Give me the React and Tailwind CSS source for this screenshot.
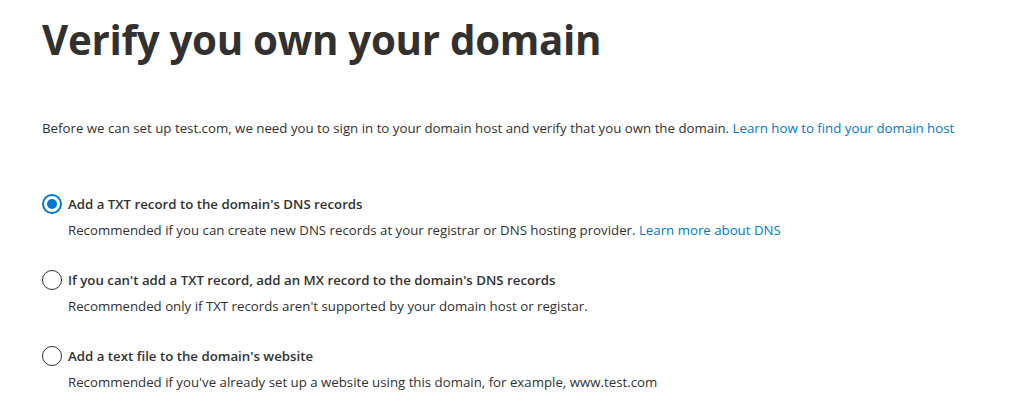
import React, { useState } from 'react';

const options = [
  {
    id: 'txt',
    title: "Add a TXT record to the domain's DNS records",
    desc: 'Recommended if you can create new DNS records at your registrar or DNS hosting provider.',
    link: 'Learn more about DNS',
  },
  {
    id: 'mx',
    title: "If you can't add a TXT record, add an MX record to the domain's DNS records",
    desc: "Recommended only if TXT records aren't supported by your domain host or registar.",
  },
  {
    id: 'file',
    title: "Add a text file to the domain's website",
    desc: "Recommended if you've already set up a website using this domain, for example, www.test.com",
  },
];

export default function App() {
  const [selected, setSelected] = useState('txt');

  return (
    <div
      className="min-h-screen bg-white px-[42px] text-[#323130]"
      style={{ fontFamily: '"Segoe UI", "Open Sans", sans-serif' }}
    >
      <h1 className="pt-[12px] text-[40.3px] font-bold leading-[56px] tracking-[-0.3px]">Verify you own your domain</h1>

      <p className="mt-[50px] text-[13.28px] leading-[20px]">
        Before we can set up test.com, we need you to sign in to your domain host and verify that you own the domain.{' '}
        <a href="#" className="text-[#0078d4]">
          Learn how to find your domain host
        </a>
      </p>

      <div className="mt-[56px] flex flex-col gap-[30px]">
        {options.map(opt => {
          const on = selected === opt.id;
          return (
            <label key={opt.id} className="flex cursor-pointer flex-col" onClick={() => setSelected(opt.id)}>
              <div className="flex items-center gap-[6px]">
                <span
                  className={`flex h-[20px] w-[20px] items-center justify-center rounded-full border ${
                    on ? 'border-[#0078d4] border-2' : 'border-[#323130]'
                  }`}
                >
                  {on && <span className="h-[10px] w-[10px] rounded-full bg-[#0078d4]" />}
                </span>
                <span className="text-[13.25px] font-semibold leading-[20px]">{opt.title}</span>
              </div>
              <p className="mt-[6px] pl-[26px] text-[13.25px] leading-[20px]">
                {opt.desc}
                {opt.link && (
                  <>
                    {' '}
                    <a href="#" className="text-[#0078d4]">
                      {opt.link}
                    </a>
                  </>
                )}
              </p>
            </label>
          );
        })}
      </div>
    </div>
  );
}
